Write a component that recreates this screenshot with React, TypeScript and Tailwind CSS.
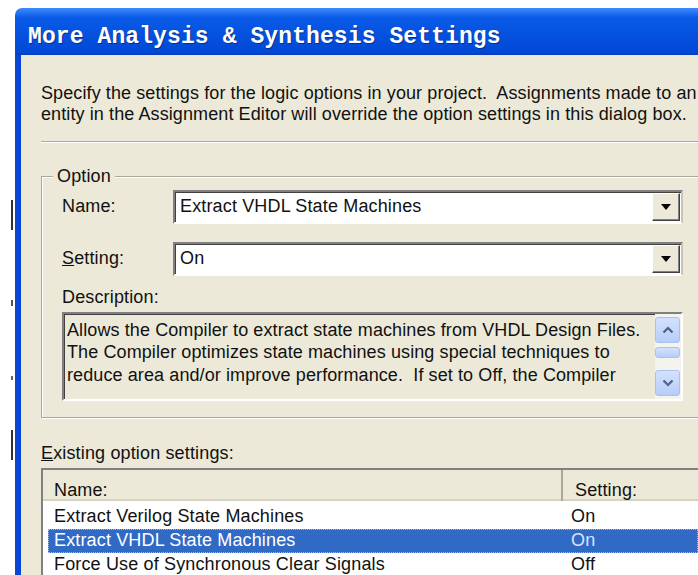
import React from 'react';

const ui = { fontFamily: '"Liberation Sans", Arial, sans-serif' };

const Arrow = () => (
  <svg width="10" height="6" viewBox="0 0 10 6">
    <path d="M0 0h10L5 6z" fill="#000" />
  </svg>
);

const Combo = ({ value }: { value: string }) => (
  <div className="flex h-[34px] flex-1 border-2 border-t-[#808080] border-l-[#808080] border-b-white border-r-[#c8c5b5] bg-white shadow-[inset_1px_1px_0_#404040]">
    <div className="flex flex-1 items-center pl-[5px] text-[#111]">{value}</div>
    <div className="m-[1px] flex w-[28px] items-center justify-center border border-t-white border-l-white border-b-[#404040] border-r-[#404040] bg-[#ECE9D8] shadow-[inset_-1px_-1px_0_#808080]">
      <Arrow />
    </div>
  </div>
);

const ScrollBtn = ({ up }: { up?: boolean }) => (
  <div className="flex h-[26px] items-center justify-center rounded-[3px] border border-[#a9c1f0] bg-gradient-to-b from-[#d3e1fd] to-[#b7cdf8]">
    <svg width="12" height="8" viewBox="0 0 12 8">
      <path d={up ? 'M1.5 6.5L6 2l4.5 4.5' : 'M1.5 1.5L6 6l4.5-4.5'} fill="none" stroke="#4d6185" strokeWidth="2.2" />
    </svg>
  </div>
);

const rows = [
  { name: 'Extract Verilog State Machines', value: 'On' },
  { name: 'Extract VHDL State Machines', value: 'On', selected: true },
  { name: 'Force Use of Synchronous Clear Signals', value: 'Off' },
];

export default function App() {
  return (
    <div className="flex h-[575px] w-[698px] overflow-hidden bg-white pt-[8px]" style={ui}>
      {/* edge of the window behind */}
      <div className="flex w-[15px] shrink-0 flex-col items-end pr-[2px]">
        <div className="mt-[192px] h-[30px] w-[2px] bg-[#333]" />
        <div className="mt-[70px] h-[6px] w-[2px] bg-[#555]" />
        <div className="mt-[70px] h-[4px] w-[2px] bg-[#666]" />
        <div className="mt-[50px] h-[30px] w-[2px] bg-[#333]" />
      </div>

      <div className="flex h-[567px] min-w-0 flex-1 flex-col">
        {/* title bar */}
        <div className="flex h-[49px] items-center rounded-tl-[7px] bg-gradient-to-b from-[#3d8bff] via-[#0a5ae8] via-[20%] to-[#0047d4] pl-[13px] pt-[12px] shadow-[inset_0_-2px_0_#0a3fc0]">
          <span
            className="text-[23px] font-bold tracking-[0.1px] whitespace-nowrap text-white [text-shadow:1px_1px_0_#0b2f8f]"
            style={{ fontFamily: '"Liberation Mono", "Courier New", monospace' }}
          >
            More Analysis &amp; Synthesis Settings
          </span>
        </div>

        {/* dialog body */}
        <div className="flex-1 border-l-[6px] border-[#0846d8] bg-[#ECE9D8] pl-[20px] pt-[28px] text-[18px] tracking-[0.15px] text-[#111]">
          <p className="leading-[21px] tracking-[0.1px] whitespace-nowrap">
            Specify the settings for the logic options in your project.&nbsp; Assignments made to an
            <br />
            entity in the Assignment Editor will override the option settings in this dialog box.
          </p>

          <div className="mt-[16px] h-[2px] border-t border-b border-t-[#aca899] border-b-white" />

          {/* option group */}
          <div className="relative mt-[33px] h-[242px] border border-r-0 border-[#aca899] shadow-[inset_1px_1px_0_#fff,1px_1px_0_#fff] pl-[20px] pr-[15px]">
            <span className="absolute -top-[12px] left-[11px] bg-[#ECE9D8] px-[4px] leading-[22px]">Option</span>

            <div className="mt-[13px] flex items-center">
              <span className="w-[111px]">Name:</span>
              <Combo value="Extract VHDL State Machines" />
            </div>
            <div className="mt-[18px] flex items-center">
              <span className="w-[111px]">
                <span className="underline">S</span>etting:
              </span>
              <Combo value="On" />
            </div>

            <div className="mt-[11px] leading-[20px]">Description:</div>
            <div className="mt-[5px] flex h-[89px] border-2 border-t-[#808080] border-l-[#808080] border-b-white border-r-white shadow-[inset_1px_1px_0_#404040]">
              <div className="flex-1 pl-[3px] pt-[5px] leading-[22.5px] tracking-[0.1px] whitespace-nowrap">
                Allows the Compiler to extract state machines from VHDL Design Files.
                <br />
                The Compiler optimizes state machines using special techniques to
                <br />
                reduce area and/or improve performance.&nbsp; If set to Off, the Compiler
              </div>
              <div className="flex w-[26px] flex-col bg-[#f4f4ef] py-[3px] pr-[1px]">
                <ScrollBtn up />
                <div className="mt-[4px] h-[11px] rounded-[3px] border border-[#a9c1f0] bg-gradient-to-b from-[#d3e1fd] to-[#b7cdf8]" />
                <div className="flex-1" />
                <ScrollBtn />
              </div>
            </div>
          </div>

          <div className="mt-[25px] leading-[20px]">
            <span className="underline">E</span>xisting option settings:
          </div>

          {/* list view */}
          <div className="mt-[5px] border-t-2 border-l-2 border-t-[#808080] border-l-[#808080] bg-white">
            <div className="flex h-[31px] bg-[#ECE9D8] shadow-[inset_0_-2px_0_#d6d2c2]">
              <div className="flex h-full w-[520px] items-center border-r-2 border-r-[#aca899] pl-[11px] pt-[10px]">Name:</div>
              <div className="flex items-center pl-[12px] pt-[10px]">Setting:</div>
            </div>
            <div className="pt-[4px]">
              {rows.map((r) => (
                <div
                  key={r.name}
                  className={
                    r.selected
                      ? 'ml-[5px] flex h-[24px] items-center border border-dotted border-[#9fb8e8] bg-[#316ac5] text-white'
                      : 'ml-[5px] flex h-[24px] items-center border border-transparent'
                  }
                >
                  <span className="w-[522px] pl-[5px] whitespace-nowrap">{r.name}</span>
                  <span className={r.selected ? 'text-[#d8e4ff]' : ''}>{r.value}</span>
                </div>
              ))}
            </div>
          </div>
        </div>
      </div>
    </div>
  );
}
